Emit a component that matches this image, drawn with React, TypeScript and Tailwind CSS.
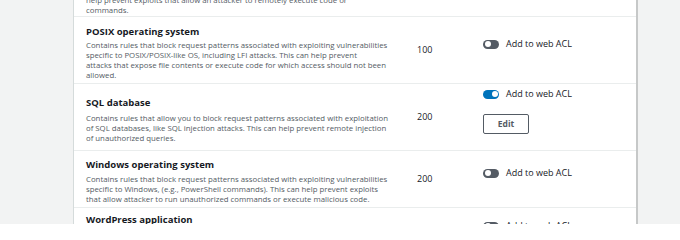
import React from "react";

type Rule = {
  name?: string;
  lines: string[];
  wcu?: number;
  enabled?: boolean;
  edit?: boolean;
  h: string;
  namePad: string;
  descGap: string;
  togglePad: string;
};

const rules: Rule[] = [
  {
    lines: [
      "help prevent exploits that allow an attacker to remotely execute code or",
      "commands.",
    ],
    h: "h-[17px]",
    namePad: "-mt-[5px]",
    descGap: "",
    togglePad: "",
  },
  {
    name: "POSIX operating system",
    lines: [
      "Contains rules that block request patterns associated with exploiting vulnerabilities",
      "specific to POSIX/POSIX-like OS, including LFI attacks. This can help prevent",
      "attacks that expose file contents or execute code for which access should not been",
      "allowed.",
    ],
    wcu: 100,
    enabled: false,
    h: "h-[67px]",
    namePad: "pt-[8px]",
    descGap: "mt-[1px]",
    togglePad: "pt-[20px]",
  },
  {
    name: "SQL database",
    lines: [
      "Contains rules that allow you to block request patterns associated with exploitation",
      "of SQL databases, like SQL injection attacks. This can help prevent remote injection",
      "of unauthorized queries.",
    ],
    wcu: 200,
    enabled: true,
    edit: true,
    h: "h-[67px]",
    namePad: "pt-[12px]",
    descGap: "mt-[3px]",
    togglePad: "pt-[3px]",
  },
  {
    name: "Windows operating system",
    lines: [
      "Contains rules that block request patterns associated with exploiting vulnerabilities",
      "specific to Windows, (e.g., PowerShell commands). This can help prevent exploits",
      "that allow attacker to run unauthorized commands or execute malicious code.",
    ],
    wcu: 200,
    enabled: false,
    h: "h-[57px]",
    namePad: "pt-[7px]",
    descGap: "mt-[2px]",
    togglePad: "pt-[15px]",
  },
  {
    name: "WordPress application",
    lines: [
      "Contains rules that block request patterns associated with exploiting vulnerabilities",
      "specific to WordPress sites.",
    ],
    wcu: 100,
    enabled: false,
    h: "h-[60px]",
    namePad: "pt-[5px]",
    descGap: "mt-[1px]",
    togglePad: "pt-[11px]",
  },
];

function Toggle({ on }: { on?: boolean }) {
  return (
    <span
      className={
        on
          ? "flex h-[9px] w-[16px] items-center justify-end rounded-full bg-[#0073bb] px-[1.5px]"
          : "flex h-[9px] w-[16px] items-center justify-start rounded-full bg-[#545b64] px-[1.5px]"
      }
    >
      <span className="h-[6px] w-[6px] rounded-full bg-white" />
    </span>
  );
}

export default function App() {
  return (
    <div
      className="flex h-[224px] w-[680px] overflow-hidden bg-[#f2f3f3] text-[#16191f]"
      style={{ fontFamily: '"Open Sans", "Noto Sans", sans-serif' }}
    >
      <div className="ml-[73px] w-[565px] border-l border-r-2 border-l-[#d5dbdb] border-r-[#c6c8c8] bg-white">
        {rules.map((r, i) => (
          <div
            key={i}
            className={`grid grid-cols-[343px_66px_1fr] border-b border-[#eaeded] ${r.h}`}
          >
            <div className={`pl-[12px] ${r.namePad}`}>
              {r.name && (
                <div className="text-[9.5px] leading-[14px] font-bold whitespace-nowrap">
                  {r.name}
                </div>
              )}
              <div className={`text-[7.8px] leading-[10px] text-[#545b64] ${r.descGap}`}>
                {r.lines.map((l) => (
                  <div key={l} className="whitespace-nowrap">
                    {l}
                  </div>
                ))}
              </div>
            </div>
            <div className="flex items-center text-[9px]">{r.wcu}</div>
            <div className={r.togglePad}>
              {r.wcu !== undefined && (
                <div className="flex h-[14px] items-center gap-[7px]">
                  <Toggle on={r.enabled} />
                  <span className="text-[9px] leading-[14px]">Add to web ACL</span>
                </div>
              )}
              {r.edit && (
                <button className="mt-[13px] flex h-[20px] w-[46px] items-center justify-center rounded-[2px] border border-[#545b64] bg-white text-[8.5px] font-bold text-[#545b64]">
                  Edit
                </button>
              )}
            </div>
          </div>
        ))}
      </div>
    </div>
  );
}
